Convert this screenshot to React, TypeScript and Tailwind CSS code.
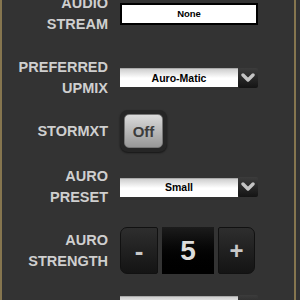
import React from "react";

function Chevron() {
  return (
    <svg width="14" height="10" viewBox="0 0 14 10" className="block">
      <path d="M2 2 L7 7 L12 2" fill="none" stroke="#c4c4c4" strokeWidth="3.4" strokeLinecap="round" strokeLinejoin="round" />
    </svg>
  );
}

function Select({ value }: { value: string }) {
  return (
    <div className="flex items-center">
      <div className="w-[118px] h-[19px] flex items-center justify-center bg-gradient-to-b from-[#cfcfcf] via-white to-white border-t border-[#aaa] text-black font-bold text-[10.5px] leading-none">
        {value}
      </div>
      <div className="w-[20px] h-[20px] flex items-center justify-center rounded-[2px] bg-gradient-to-b from-[#3c3c3c] to-[#141414]">
        <Chevron />
      </div>
    </div>
  );
}

function Row({ label, height, children }: { label?: string[]; height: number; children?: React.ReactNode }) {
  return (
    <div className="flex items-center shrink-0" style={{ height }}>
      <div className="w-[106px] text-right text-[#cfcfcf] font-bold text-[14.5px] leading-[21px]">
        {(label ?? []).map((l) => (
          <div key={l}>{l}</div>
        ))}
      </div>
      <div className="ml-[12px]">{children}</div>
    </div>
  );
}

export default function App() {
  return (
    <div className="w-[300px] h-[300px] overflow-hidden bg-[#333333]" style={{ fontFamily: '"Liberation Sans", Arial, sans-serif' }}>
      <div className="w-[296px] h-[300px] border-l-2 border-r-2 border-[#86764f] flex flex-col">
        <div className="-mt-[18px] flex flex-col">
          <Row label={["AUDIO", "STREAM"]} height={63}>
            <div className="w-[138px] h-[22px] bg-white border-2 border-black flex items-center justify-center text-black font-bold text-[9.5px] leading-none">
              None
            </div>
          </Row>
          <Row label={["PREFERRED", "UPMIX"]} height={65}>
            <Select value="Auro-Matic" />
          </Row>
          <Row label={["STORMXT"]} height={42}>
            <div className="w-[47px] h-[42px] rounded-[8px] bg-[#262626] shadow-[0_1px_2px_rgba(0,0,0,0.6)] flex items-center justify-center">
              <div className="w-[39px] h-[34px] rounded-[5px] bg-gradient-to-b from-[#dadada] to-[#989898] border border-[#777] flex items-center justify-center text-[#3c3c3c] font-bold text-[15px] leading-none">
                Off
              </div>
            </div>
          </Row>
          <Row label={["AURO", "PRESET"]} height={70}>
            <Select value="Small" />
          </Row>
          <Row label={["AURO", "STRENGTH"]} height={57}>
            <div className="flex gap-[4px] h-[47px]">
              <div className="w-[38px] rounded-l-[7px] rounded-r-[2px] bg-gradient-to-b from-[#2e2e2e] to-[#141414] border border-[#111] flex items-center justify-center text-[#c8c8c8] font-bold text-[26px] leading-none">
                -
              </div>
              <div className="w-[52px] bg-gradient-to-b from-[#1c1c1c] to-black flex items-center justify-center text-[#dcdcdc] font-bold text-[28px] leading-none">
                5
              </div>
              <div className="w-[37px] rounded-r-[7px] rounded-l-[2px] bg-gradient-to-b from-[#2e2e2e] to-[#141414] border border-[#111] flex items-center justify-center text-[#c8c8c8] font-bold text-[24px] leading-none">
                +
              </div>
            </div>
          </Row>
          <Row height={52}>
            <Select value="" />
          </Row>
        </div>
      </div>
    </div>
  );
}
